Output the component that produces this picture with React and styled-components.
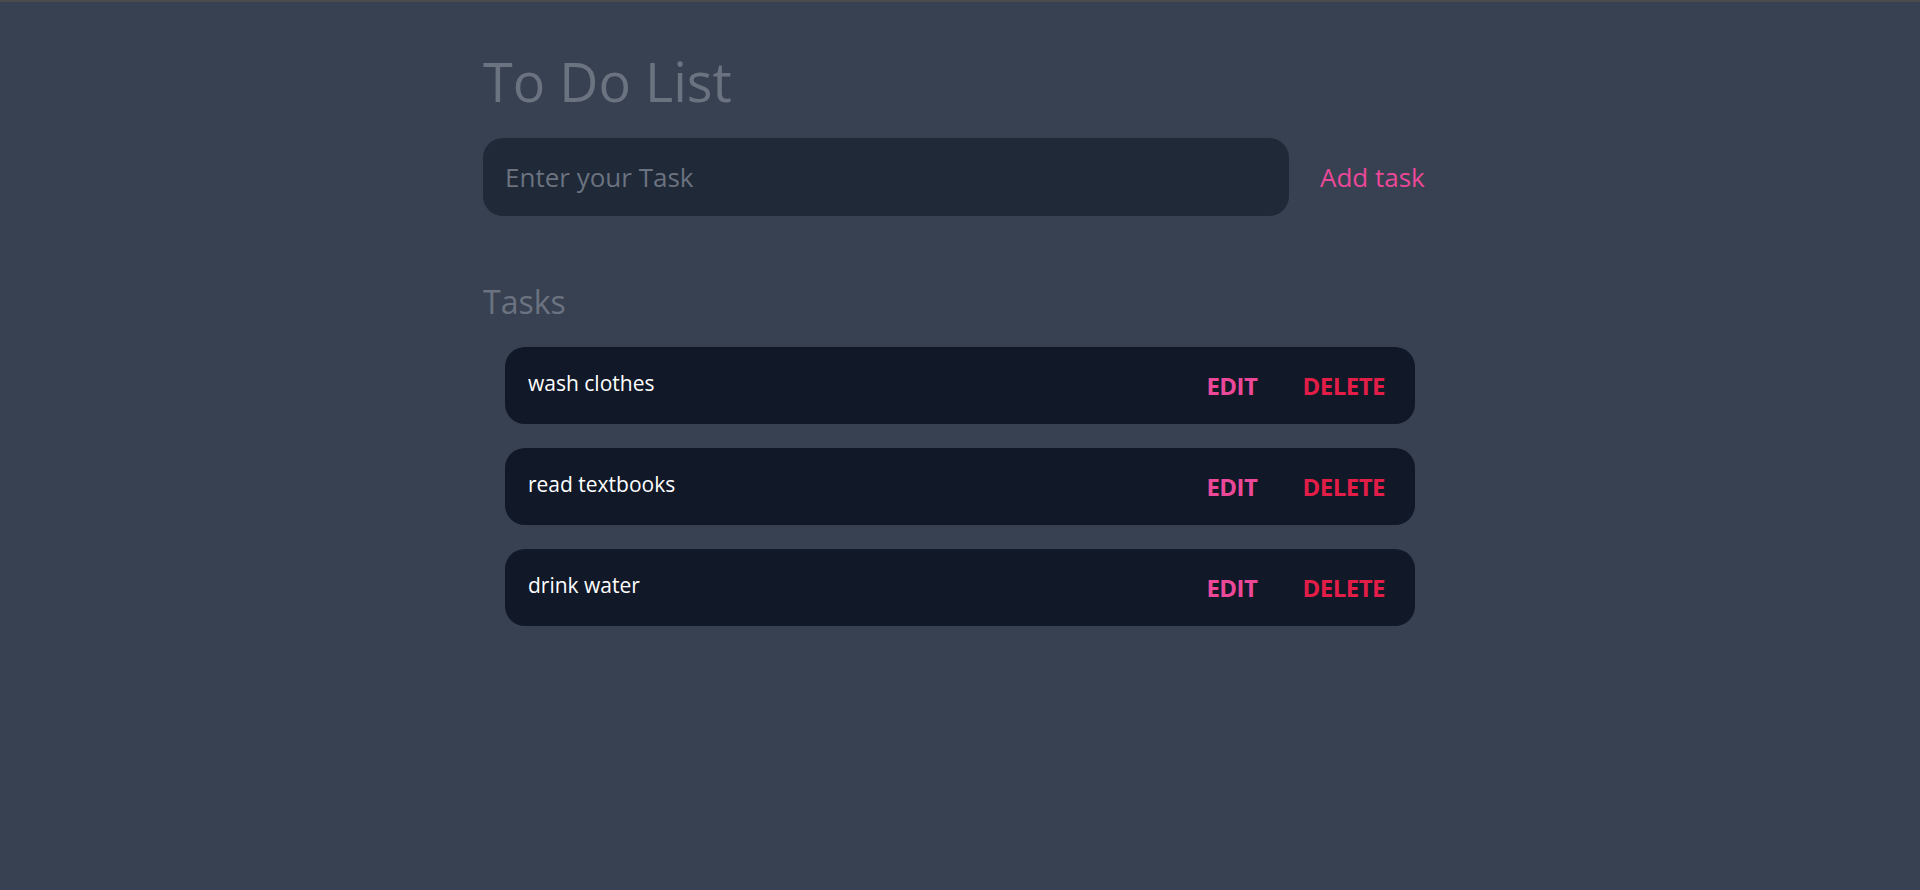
import React, { useState } from 'react';
import styled, { createGlobalStyle } from 'styled-components';

const GlobalStyle = createGlobalStyle`
	html,
	body {
		margin: 0;
		padding: 0;
		background: #374151;
		font-family: 'Open Sans', 'Noto Sans', sans-serif;
	}

	body {
		border-top: 2px solid #4b4b4b;
		min-height: 888px;
	}
`;

const initialTasks = ['wash clothes', 'read textbooks', 'drink water'];

const App = () => {
	const [tasks, setTasks] = useState(initialTasks);
	const [value, setValue] = useState('');

	const addTask = (e) => {
		e.preventDefault();
		if (!value.trim()) return;
		setTasks([...tasks, value.trim()]);
		setValue('');
	};

	return (
		<Page>
			<GlobalStyle />
			<Container>
				<Title>To Do List</Title>
				<Form onSubmit={addTask}>
					<TaskInput
						placeholder="Enter your Task"
						value={value}
						onChange={(e) => setValue(e.target.value)}
					/>
					<AddButton type="submit">Add task</AddButton>
				</Form>

				<Heading>Tasks</Heading>
				<List>
					{tasks.map((task, i) => (
						<Card key={i}>
							<TaskText>{task}</TaskText>
							<Actions>
								<Action color="#ec4899">Edit</Action>
								<Action
									color="#e11d48"
									onClick={() => setTasks(tasks.filter((_, j) => j !== i))}
								>
									Delete
								</Action>
							</Actions>
						</Card>
					))}
				</List>
			</Container>
		</Page>
	);
};

const Page = styled.div`
	padding-top: 47px;
`;

const Container = styled.main`
	width: 954px;
	margin: 0 auto;
`;

const Title = styled.h1`
	margin: 0 0 24px;
	font-size: 54px;
	line-height: 1.2;
	font-weight: 400;
	color: #6b7280;
`;

const Form = styled.form`
	display: flex;
	align-items: center;
	gap: 31px;
`;

const TaskInput = styled.input`
	width: 806px;
	height: 78px;
	box-sizing: border-box;
	padding: 0 22px;
	border: none;
	border-radius: 20px;
	background: #1f2937;
	color: #e5e7eb;
	font-family: inherit;
	font-size: 26px;
	outline: none;

	&::placeholder {
		color: #6b7280;
	}
`;

const AddButton = styled.button`
	padding: 0;
	border: none;
	background: none;
	color: #ec4899;
	font-family: inherit;
	font-size: 26px;
	cursor: pointer;
`;

const Heading = styled.h2`
	margin: 67px 0 26px;
	font-size: 32px;
	line-height: 1.2;
	font-weight: 400;
	color: #6b7280;
`;

const List = styled.div`
	display: flex;
	flex-direction: column;
	gap: 24px;
	padding: 0 22px;
`;

const Card = styled.div`
	display: flex;
	align-items: center;
	justify-content: space-between;
	height: 77px;
	padding: 0 30px 0 23px;
	border-radius: 20px;
	background: #111827;
`;

const TaskText = styled.span`
	padding-bottom: 5px;
	color: #fff;
	font-size: 21px;
`;

const Actions = styled.div`
	display: flex;
	align-items: center;
	gap: 45px;
`;

const Action = styled.button`
	padding: 0;
	border: none;
	background: none;
	color: ${(p) => p.color};
	font-family: inherit;
	font-size: 24px;
	font-weight: 700;
	text-transform: uppercase;
	letter-spacing: -0.5px;
	cursor: pointer;
`;

export default App;
